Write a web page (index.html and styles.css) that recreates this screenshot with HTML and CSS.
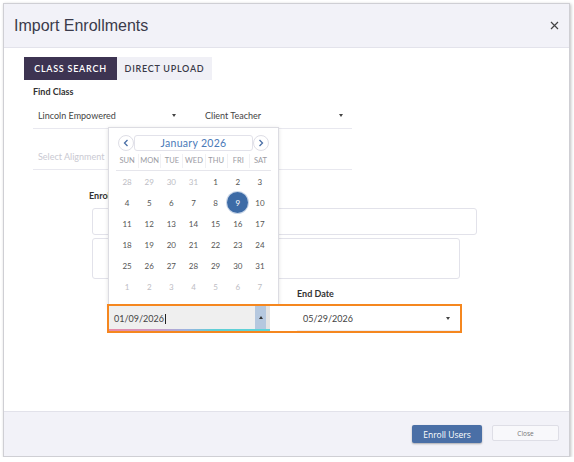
FILE: index.html
```html
<!DOCTYPE html>
<html lang="en">
<head>
<meta charset="utf-8">
<title>Import Enrollments</title>
<link rel="stylesheet" href="styles.css">
</head>
<body>
<div class="modal">
  <header class="modal-header">
    <h1 class="modal-title">Import Enrollments</h1>
    <button class="close-x" aria-label="Close">
      <svg width="9" height="9" viewBox="0 0 9 9"><path d="M1 1 L8 8 M8 1 L1 8" stroke="#444" stroke-width="1.2" fill="none"/></svg>
    </button>
  </header>

  <main class="modal-body">
    <div class="tabs">
      <div class="tab active">CLASS SEARCH</div>
      <div class="tab">DIRECT UPLOAD</div>
    </div>

    <div class="field-label find-label">Find Class</div>
    <div class="select-row">
      <div class="select select-school"><span>Lincoln Empowered</span><span class="caret"></span></div>
      <div class="select select-teacher"><span>Client Teacher</span><span class="caret"></span></div>
    </div>
    <div class="select-row align-row">
      <span class="placeholder">Select Alignment</span>
    </div>

    <section class="enroll">
      <div class="field-label enroll-label">Enrol</div>
      <div class="text-box"></div>
      <div class="text-area"></div>
      <div class="date-labels">
        <span class="start-label"></span>
        <span class="field-label date-label end-label">End Date</span>
      </div>
      <div class="dates">
        <div class="date-input start">
          <span class="date-text">01/09/2026</span><span class="cursor"></span>
          <span class="spinner"><span class="up"></span></span>
          <span class="spin-edge"></span>
          <span class="focus-line"></span>
        </div>
        <div class="date-input end">
          <span class="date-text">05/29/2026</span>
          <span class="caret"></span>
        </div>
      </div>
    </section>

    <div class="calendar">
      <div class="cal-head">
        <span class="nav">
          <svg width="6" height="8" viewBox="0 0 6 8"><path d="M4.5 1 L1.5 4 L4.5 7" stroke="#4a6fa6" stroke-width="1.3" fill="none"/></svg>
        </span>
        <span class="month">January 2026</span>
        <span class="nav">
          <svg width="6" height="8" viewBox="0 0 6 8"><path d="M1.5 1 L4.5 4 L1.5 7" stroke="#4a6fa6" stroke-width="1.3" fill="none"/></svg>
        </span>
      </div>
      <div class="dow">
        <span>SUN</span><span>MON</span><span>TUE</span><span>WED</span><span>THU</span><span>FRI</span><span>SAT</span>
      </div>
      <div class="days">
        <span class="muted">28</span><span class="muted">29</span><span class="muted">30</span><span class="muted">31</span><span>1</span><span>2</span><span>3</span>
        <span>4</span><span>5</span><span>6</span><span>7</span><span>8</span><span class="selected"><b>9</b></span><span>10</span>
        <span>11</span><span>12</span><span>13</span><span>14</span><span>15</span><span>16</span><span>17</span>
        <span>18</span><span>19</span><span>20</span><span>21</span><span>22</span><span>23</span><span>24</span>
        <span>25</span><span>26</span><span>27</span><span>28</span><span>29</span><span>30</span><span>31</span>
        <span class="muted">1</span><span class="muted">2</span><span class="muted">3</span><span class="muted">4</span><span class="muted">5</span><span class="muted">6</span><span class="muted">7</span>
      </div>
    </div>
  </main>

  <footer class="modal-footer">
    <button class="btn-primary">Enroll Users</button>
    <button class="btn-close">Close</button>
  </footer>
</div>
</body>
</html>
```

FILE: styles.css
```css
* { box-sizing: border-box; }

body {
  margin: 0;
  background: #ffffff;
  font-family: Lato, "Noto Sans", sans-serif;
  color: #444;
}

.modal {
  margin: 3px 0 0 3px;
  width: 567px;
  height: 454px;
  border: 1px solid #cfcfd4;
  box-shadow: 1px 1px 3px rgba(0, 0, 0, 0.25);
  display: flex;
  flex-direction: column;
  background: #fff;
}

.modal-header {
  height: 44px;
  flex: none;
  background: #f2f2f8;
  border-bottom: 1px solid #e3e3eb;
  display: flex;
  align-items: center;
  justify-content: space-between;
  padding: 0 10px 0 10px;
}

.modal-title {
  margin: 0;
  font-family: "Liberation Sans", Arial, sans-serif;
  font-weight: 400;
  font-size: 16px;
  color: #3b3b4b;
}

.close-x {
  border: 0;
  background: none;
  padding: 0;
  width: 10px;
  height: 10px;
  display: flex;
  align-items: center;
  justify-content: center;
}

.modal-body {
  flex: 1;
  position: relative;
  padding: 9px 0 0 20px;
}

.tabs {
  display: flex;
  height: 23px;
}

.tab {
  display: flex;
  align-items: center;
  justify-content: center;
  font-size: 9px;
  font-weight: 600;
  letter-spacing: 0.75px;
  color: #3a3a48;
  background: #f0f0f6;
  width: 95px;
}

.tab.active {
  background: #3d3452;
  color: #fff;
  width: 93px;
}

.field-label {
  font-size: 9px;
  font-weight: 700;
  color: #333;
  line-height: 13px;
}

.find-label {
  margin: 5px 0 0 9px;
}

.select-row {
  margin: 5px 0 0 9px;
  width: 319px;
  height: 26px;
  border-bottom: 1px solid #e8e8ef;
  display: flex;
  align-items: center;
  font-size: 9px;
  color: #444;
}

.select {
  display: flex;
  align-items: center;
  justify-content: space-between;
  height: 100%;
}

.select-school {
  width: 167px;
  padding: 0 24px 0 5px;
}

.select-teacher {
  flex: 1;
  padding: 0 9px 0 5px;
}

.caret {
  width: 0;
  height: 0;
  border-left: 2.5px solid transparent;
  border-right: 2.5px solid transparent;
  border-top: 3px solid #444;
}

.align-row {
  margin-top: 0;
  height: 41px;
  align-items: flex-end;
  padding: 0 0 6px 5px;
}

.placeholder {
  color: #c9c9d2;
  line-height: 12px;
}

.enroll {
  margin-left: 65px;
}

.enroll-label {
  margin-top: 19px;
  white-space: nowrap;
}

.text-box {
  margin: 6px 0 0 3px;
  width: 385px;
  height: 27px;
  border: 1px solid #e2e2ea;
  border-radius: 3px;
}

.text-area {
  margin: 3px 0 0 3px;
  width: 368px;
  height: 41px;
  border: 1px solid #e2e2ea;
  border-radius: 3px;
}

.date-labels {
  margin: 8px 0 0 18px;
  height: 13px;
  display: flex;
}

.start-label {
  width: 190px;
}

.dates {
  margin: 4px 0 0 18px;
  width: 355px;
  height: 29px;
  border: 2px solid #f5871f;
  display: flex;
  gap: 2px;
  position: relative;
  z-index: 2;
  background: #fff;
}

.date-input {
  position: relative;
  display: flex;
  align-items: center;
  font-size: 9px;
  color: #444;
}

.date-input.start {
  width: 161px;
  background: #efefef;
  padding-left: 5px;
}

.cursor {
  width: 1px;
  height: 10px;
  background: #222;
  margin-left: 1px;
}

.spinner {
  position: absolute;
  right: 4px;
  top: 0;
  bottom: 2px;
  width: 11px;
  background: #b5c8df;
  display: flex;
  align-items: center;
  justify-content: center;
}

.spinner .up {
  width: 0;
  height: 0;
  border-left: 2.5px solid transparent;
  border-right: 2.5px solid transparent;
  border-bottom: 3px solid #333;
}

.spin-edge {
  position: absolute;
  right: 0;
  top: 0;
  bottom: 2px;
  width: 4px;
  background: #e4e4e4;
}

.focus-line {
  position: absolute;
  left: 0;
  right: 0;
  bottom: 0;
  height: 2px;
  background: linear-gradient(to right, #e98aa6 0%, #c99ac6 30%, #9db3e0 48%, #5fcfd6 65%, #5fd3d8 100%);
}

.date-input.end {
  flex: 1;
  justify-content: space-between;
  padding: 0 10px 0 31px;
}

.date-input.end::after {
  content: "";
  position: absolute;
  left: 25px;
  right: 0;
  bottom: 0;
  height: 1px;
  background: #ececf2;
}

/* calendar popup */
.calendar {
  position: absolute;
  left: 104px;
  top: 79px;
  width: 171px;
  height: 181px;
  background: #fff;
  border: 1px solid #dcdce2;
  box-shadow: 0 1px 4px rgba(0, 0, 0, 0.12);
  z-index: 1;
  padding: 7px 7px 0 7px;
}

.cal-head {
  margin: 0 2px;
  height: 16px;
  display: flex;
}

.nav {
  width: 16px;
  height: 16px;
  border: 1px solid #dedee6;
  border-radius: 50%;
  display: flex;
  align-items: center;
  justify-content: center;
}

.month {
  flex: 1;
  border: 1px solid #e2e2ea;
  border-radius: 3px;
  display: flex;
  align-items: center;
  justify-content: center;
  font-size: 10.5px;
  color: #4a7ab8;
  letter-spacing: 0.3px;
}

.dow {
  display: grid;
  grid-template-columns: repeat(7, 1fr);
  height: 20px;
  border-bottom: 1px solid #e6e6ec;
  align-items: center;
}

.dow span {
  font-size: 7.5px;
  color: #9a9aa2;
  text-align: center;
  border-left: 1px solid #f1f1f4;
  line-height: 14px;
}

.dow span:first-child {
  border-left: 0;
}

.days {
  display: grid;
  grid-template-columns: repeat(7, 1fr);
  grid-auto-rows: 21px;
}

.days span {
  display: flex;
  align-items: center;
  justify-content: center;
  font-size: 8px;
  color: #555;
}

.days span.muted {
  color: #bdbdc4;
}

.days span.selected b {
  width: 21px;
  height: 21px;
  border-radius: 50%;
  background: #3d6ba6;
  color: #fff;
  font-weight: 400;
  display: flex;
  align-items: center;
  justify-content: center;
  box-shadow: 0 0 0 1px #c9d6e8;
}

.modal-footer {
  flex: none;
  height: 45px;
  background: #f2f2f8;
  border-top: 1px solid #e2e2ea;
  display: flex;
  justify-content: flex-end;
  align-items: flex-start;
  gap: 10px;
  padding: 13px 10px 0 0;
}

.btn-primary {
  width: 70px;
  height: 18px;
  border: 0;
  border-radius: 2px;
  background: #4a6fa6;
  color: #fff;
  font-family: "Open Sans", "Noto Sans", sans-serif;
  font-size: 8.5px;
  box-shadow: 0 1px 2px rgba(0, 0, 0, 0.3);
  padding: 0;
}

.btn-close {
  width: 67px;
  height: 16px;
  border: 1px solid #dedee6;
  border-radius: 2px;
  background: #f8f8fb;
  color: #777;
  font-family: "Open Sans", "Noto Sans", sans-serif;
  font-size: 6.5px;
  padding: 0;
}
```
